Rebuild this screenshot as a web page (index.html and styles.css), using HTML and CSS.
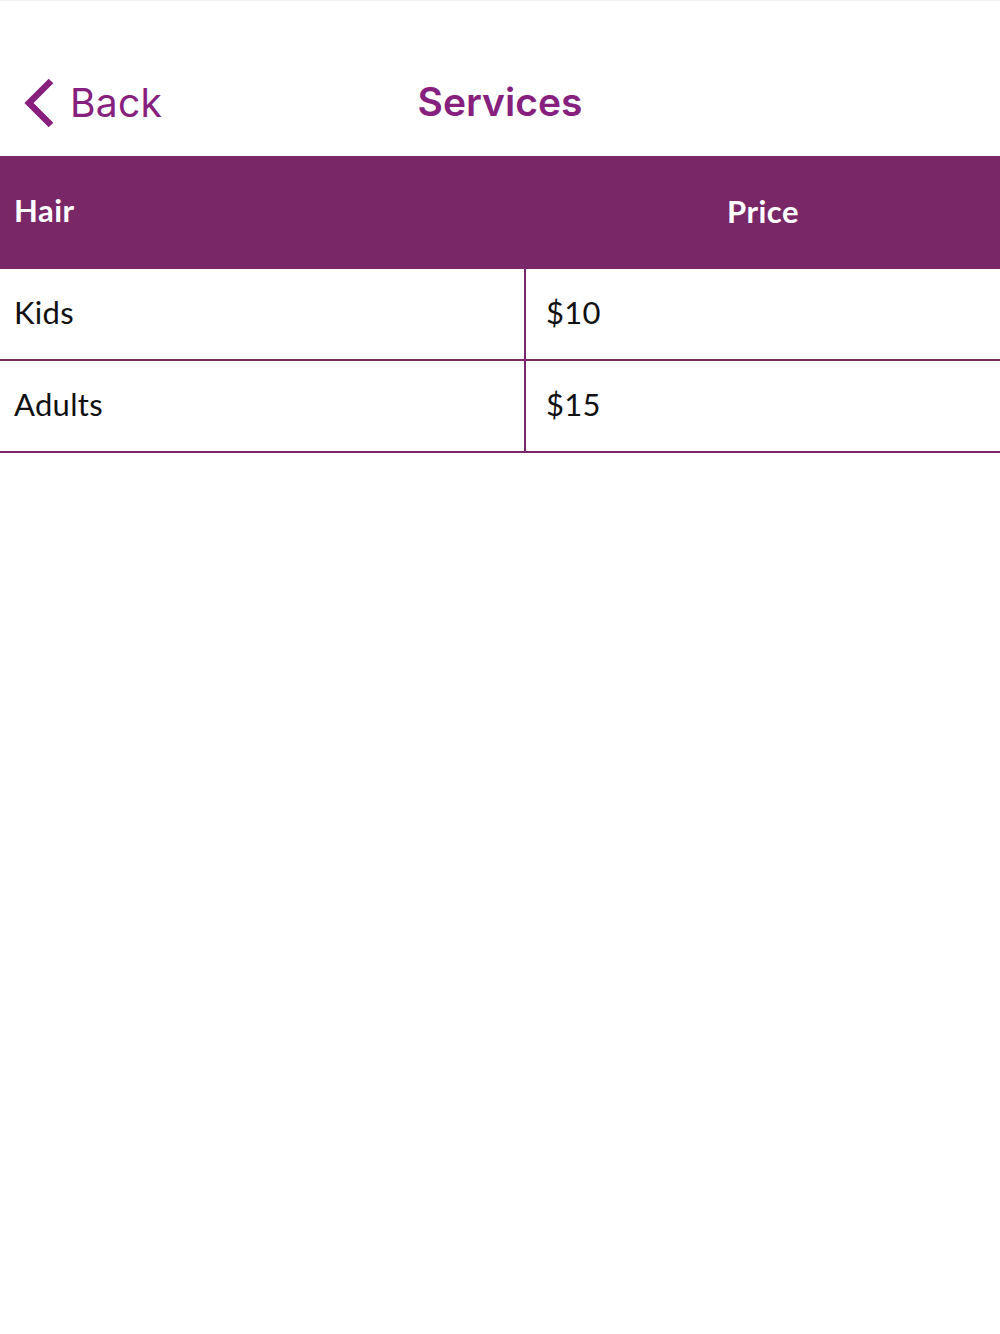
FILE: index.html
```html
<!DOCTYPE html>
<html>
<head>
<meta charset="utf-8">
<link rel="stylesheet" href="styles.css">
</head>
<body>
<div class="topline"></div>
<header class="nav">
  <a class="back">
    <svg class="chev" width="34" height="52" viewBox="0 0 34 52"><path d="M29 4 L7 26 L29 48" fill="none" stroke="#861f7d" stroke-width="6.5"/></svg>
    <span>Back</span>
  </a>
  <h1 class="title">Services</h1>
</header>
<div class="table">
  <div class="row head">
    <div class="cell c1">Hair</div>
    <div class="cell c2">Price</div>
  </div>
  <div class="row body">
    <div class="cell c1">Kids</div>
    <div class="cell c2">$10</div>
  </div>
  <div class="row body">
    <div class="cell c1">Adults</div>
    <div class="cell c2">$15</div>
  </div>
</div>
</body>
</html>
```
FILE: styles.css
```css
html, body { margin: 0; padding: 0; background: #fff; }
body { width: 1000px; height: 1334px; font-family: "Lato", "DejaVu Sans", sans-serif; }
.topline { height: 1px; background: #f1f1f1; }
.nav { position: relative; height: 155px; display: flex; align-items: flex-start; }
.back { display: flex; align-items: center; color: #861f7d; margin-top: 76px; margin-left: 22px; font-family: "Inter", "Roboto", sans-serif; font-size: 39px; gap: 14px; }
.back span { line-height: 52px; letter-spacing: 0.3px; }
.title { position: absolute; left: 0; right: 0; top: 76px; margin: 0; text-align: center; font-family: "Inter", "Roboto", sans-serif; font-weight: 600; font-size: 39px; color: #861f7d; line-height: 50px; pointer-events: none; }
.table { display: flex; flex-direction: column; }
.row { display: grid; grid-template-columns: 526px 1fr; }
.head { background: #7a2767; height: 113px; color: #fff; font-weight: 700; font-size: 31px; letter-spacing: 0.5px; }
.head .cell { display: flex; align-items: center; }
.head .c1 { padding-left: 14px; padding-bottom: 6px; }
.head .c2 { justify-content: center; padding-bottom: 4px; }
.body { height: 90px; border-bottom: 2px solid #7a2767; font-size: 31px; color: #111; letter-spacing: 0.3px; }
.body .cell { display: flex; align-items: center; padding-bottom: 4px; }
.body .c1 { padding-left: 14px; border-right: 2px solid #7a2767; }
.body .c2 { padding-left: 20px; }
```
